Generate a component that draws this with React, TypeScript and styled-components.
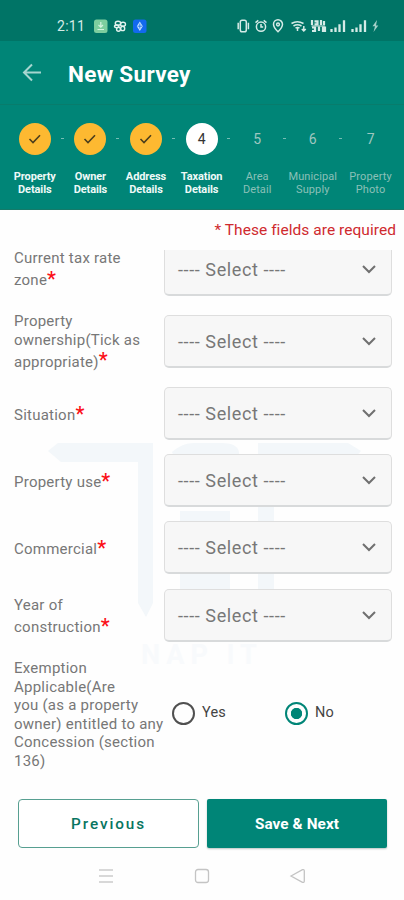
import React, { useState } from "react";
import styled, { createGlobalStyle } from "styled-components";

const teal = "#008577";

const GlobalStyle = createGlobalStyle`
  * { box-sizing: border-box; }
  body { margin: 0; background: #fff; font-family: Roboto, "Liberation Sans", sans-serif; }
  button { font-family: inherit; }
`;

const Screen = styled.div`
  width: 404px;
  height: 900px;
  display: flex;
  flex-direction: column;
  position: relative;
  overflow: hidden;
  background: #fefefe;
`;

const StatusBar = styled.div`
  height: 41px;
  padding: 10px 22px 0 57px;
  background: #007466;
  color: #d5ebe7;
  display: flex;
  justify-content: space-between;
  align-items: center;
`;

const Clock = styled.span`
  font-size: 14px;
  letter-spacing: 0.3px;
  line-height: 16px;
  width: 36px;
`;

const StatusGroup = styled.div`
  display: flex;
  align-items: center;
  height: 16px;
  svg { display: block; }
`;

const AppBar = styled.header`
  height: 64px;
  padding: 2px 20px 0;
  background: ${teal};
  border-bottom: 1px solid #087c6c;
  display: flex;
  align-items: center;
  gap: 24px;
`;

const Title = styled.h1`
  margin: 0;
  font-size: 22.5px;
  font-weight: 700;
  line-height: 28px;
  letter-spacing: 0.3px;
  color: #fff;
`;

const Stepper = styled.nav`
  height: 105px;
  padding: 18px 0 0 7px;
  background: ${teal};
  border-bottom: 1px solid #147a69;
  display: grid;
  grid-template-columns: repeat(6, 55.6px) 60px;
`;

const Step = styled.div`
  display: flex;
  flex-direction: column;
  align-items: center;
  position: relative;
  & + &::before {
    content: "";
    position: absolute;
    left: -2px;
    top: 15px;
    width: 3px;
    height: 1px;
    background: #76bdb4;
  }
`;

type StepState = "done" | "current" | "todo";

const Bullet = styled.span<{ $state: StepState }>`
  width: 32px;
  height: 32px;
  border-radius: 50%;
  display: flex;
  align-items: center;
  justify-content: center;
  font-size: 14px;
  color: ${(p) => (p.$state === "current" ? "#333" : "#9fc7c0")};
  background: ${(p) => (p.$state === "done" ? "#fdb931" : p.$state === "current" ? "#fff" : "transparent")};
`;

const StepLabel = styled.span<{ $state: StepState }>`
  margin-top: 15px;
  font-size: 11px;
  line-height: 13.4px;
  text-align: center;
  white-space: pre;
  font-weight: ${(p) => (p.$state === "todo" ? 400 : 700)};
  letter-spacing: ${(p) => (p.$state === "todo" ? "0.1px" : "-0.1px")};
  color: ${(p) => (p.$state === "todo" ? "#8bc0b8" : "#eef9f7")};
`;

const RequiredNote = styled.p`
  margin: 0;
  height: 40px;
  padding: 10px 8px 0 0;
  text-align: right;
  font-size: 15.5px;
  line-height: 20px;
  letter-spacing: 0.05px;
  color: #cf2a2e;
`;

const Form = styled.main`
  height: 535px;
  position: relative;
  overflow: hidden;
`;

const Watermark = styled.svg`
  position: absolute;
  left: 40px;
  top: 185px;
`;

const Fields = styled.div`
  position: relative;
  margin-top: -7px;
  display: grid;
  grid-template-rows: 72px 72px 67px 67px 68px 66px 110px;
  padding: 0 12px 0 14px;
`;

const FieldRow = styled.div`
  display: grid;
  grid-template-columns: 150px 228px;
  align-items: start;
`;

const Label = styled.label<{ $top: number }>`
  margin-top: ${(p) => p.$top}px;
  font-size: 15px;
  letter-spacing: 0.24px;
  color: #777;
  white-space: nowrap;
`;

const Line = styled.span<{ $last?: boolean }>`
  display: flex;
  align-items: flex-end;
  height: ${(p) => (p.$last ? "22px" : "18.6px")};
  line-height: 18.6px;
`;

const Star = styled.sup`
  align-self: flex-start;
  font-size: 20px;
  font-weight: 500;
  line-height: 22px;
  letter-spacing: 0;
  color: #fb1018;
`;

const Select = styled.button`
  height: 53px;
  padding: 0 14px 0 13px;
  border: 1px solid #dedede;
  border-bottom: 2px solid #d8dadb;
  border-radius: 5px;
  background: #f7f7f7;
  display: flex;
  align-items: center;
  justify-content: space-between;
  font-size: 18px;
  letter-spacing: 0.6px;
  color: #777;
`;

const Radios = styled.div`
  display: grid;
  grid-template-columns: 113px 100px;
  padding: 46px 0 0 8px;
`;

const RadioOption = styled.label`
  display: flex;
  align-items: center;
  gap: 7px;
  font-size: 14.5px;
  letter-spacing: 0.2px;
  line-height: 24px;
  color: #444;
`;

const RadioMark = styled.input`
  appearance: none;
  margin: 0;
  width: 23px;
  height: 23px;
  border: 2px solid #505050;
  border-radius: 50%;
  &:checked {
    border-color: ${teal};
    background: radial-gradient(circle, ${teal} 0 5.3px, transparent 6px);
  }
`;

const Actions = styled.footer`
  height: 65px;
  padding: 14px 17px 2px 18px;
  display: grid;
  grid-template-columns: 181px 180px;
  gap: 8px;
`;

const ActionButton = styled.button<{ $primary?: boolean }>`
  height: 49px;
  padding: 0;
  border: ${(p) => (p.$primary ? "0" : "1px solid #579f91")};
  border-radius: ${(p) => (p.$primary ? "2px" : "4px")};
  background: ${(p) => (p.$primary ? teal : "#fff")};
  color: ${(p) => (p.$primary ? "#fff" : "#087561")};
  box-shadow: ${(p) => (p.$primary ? "0 1px 2px #b9c5c3" : "none")};
  font-size: 15.3px;
  font-weight: ${(p) => (p.$primary ? 700 : 500)};
  letter-spacing: ${(p) => (p.$primary ? "0.1px" : "1.9px")};
`;

const SystemNav = styled.div`
  height: 50px;
  padding: 2px 97px 0 98px;
  display: flex;
  align-items: center;
  justify-content: space-between;
  svg { display: block; }
`;

const Chevron = () => (
  <svg width="16" height="12" viewBox="0 0 16 12" fill="none" stroke="#707070" strokeWidth="2">
    <path d="M2 3 8 9l6-6" />
  </svg>
);

const BackArrow = () => (
  <svg width="24" height="26" viewBox="0 0 24 26" fill="none" stroke="#a6d6d0" strokeWidth="2">
    <path d="M21 11.5H4.5M12 3.5 4 11.5l8 8" />
  </svg>
);

const Tick = () => (
  <svg width="14" height="12" viewBox="0 0 14 12" fill="none" stroke="#4c3e1c" strokeWidth="1.6">
    <path d="m1.5 6 3.5 3.5L12 2.3" />
  </svg>
);

const NotificationIcons = () => (
  <svg width="56" height="16" viewBox="0 0 56 16">
    <rect x="1" y="1.5" width="13.5" height="13.5" rx="2.5" fill="#7dce9f" />
    <path d="M7.8 4v5M5.5 7l2.3 2.2L10 7M4.5 11.5h6.5" fill="none" stroke="#d4f4e0" strokeWidth="1.2" />
    <g fill="none" stroke="#e1f2ee" strokeWidth="1.4">
      <ellipse cx="25" cy="5.2" rx="2.7" ry="1.9" />
      <ellipse cx="30" cy="6.2" rx="2.5" ry="1.9" />
      <ellipse cx="29.7" cy="10.4" rx="2" ry="2.2" />
      <ellipse cx="25.5" cy="11.2" rx="1.9" ry="2" />
      <ellipse cx="23.7" cy="8.3" rx="2.2" ry="1.3" />
    </g>
    <rect x="40" y="1.5" width="13.5" height="13.5" rx="2.5" fill="#1269ee" />
    <path d="m46.8 3.5 3 4.7-3 4.7-3-4.7z" fill="#c5e2ff" />
    <path d="M46.8 5.6v5M44.5 8.2h4.6" stroke="#1269ee" strokeWidth=".8" />
  </svg>
);

const SystemIcons = () => (
  <svg width="145" height="16" viewBox="0 0 145 16" fill="none" stroke="#d5ebe7" strokeWidth="1.5">
    <rect x="3.3" y="2.2" width="6" height="11.6" rx="1.8" />
    <path d="M1.2 4.8v6.4M11.4 4.8v6.4" />
    <circle cx="24" cy="8.7" r="4.6" />
    <path d="M24 6v3h2.2M18.5 4.6l2.8-2.3M29.5 4.6l-2.8-2.3" />
    <path d="M41 13.7s-4.5-4.2-4.5-7.4a4.5 4.5 0 0 1 9 0c0 3.2-4.5 7.4-4.5 7.4Z" />
    <circle cx="41" cy="6.5" r="1.4" />
    <path d="M54.5 5.5c4-2.5 8-2.3 12 0M56.5 8c2.8-1.8 5.4-1.6 8 0M58.5 10.2c1.5-1 2.7-1 4 0M66.8 8v5M64.8 11l2 2 2-2" />
    <path d="M60.5 10v3" />
    <g strokeWidth="2.2">
      <path d="M75 2v5M77.5 3.3h3v3h-3M84 2v5M87 3v4M75 9.5h3v3.5h-3M82 8.5V13M86 9.5h2V13h-2z" />
    </g>
    <path d="M74.5 8h13.5" opacity=".7" />
    <g strokeWidth="2.3">
      <path d="M94.5 11V14M98.5 9.5V14M102.5 6.2V14M107 2.2V14M115.5 11V14M119.5 9.5V14M123.5 6.2V14M128 2.2V14" />
    </g>
    <path d="m140 2-4.5 6.3h2.5L136.5 14l4.8-6.5H139z" fill="#a5d0c8" stroke="none" />
  </svg>
);

const WatermarkArt = () => (
  <Watermark width="330" height="240" viewBox="0 0 330 240" aria-hidden="true">
    <g fill="#f3f7fa">
      <path d="M8 16 18 8h95v160l-7 14-8-14V27H21z" />
      <path d="M132 17q10-9 22-9h28q15 0 17 9v12h-62zM140 76h50v86h-50z" />
      <path d="M218 8h90l13 8-10 11h-77v135h-16z" />
    </g>
    <text x="101" y="229" fontSize="27" fontWeight="700" letterSpacing="6" fill="#f8fafc">NAP IT</text>
  </Watermark>
);

const steps: { label: string; state: StepState }[] = [
  { label: "Property\nDetails", state: "done" },
  { label: "Owner\nDetails", state: "done" },
  { label: "Address\nDetails", state: "done" },
  { label: "Taxation\nDetails", state: "current" },
  { label: "Area\nDetail", state: "todo" },
  { label: "Municipal\nSupply", state: "todo" },
  { label: "Property\nPhoto", state: "todo" },
];

const fields = [
  { lines: ["Current tax rate", "zone"], top: 6 },
  { lines: ["Property", "ownership(Tick as", "appropriate)"], top: -3 },
  { lines: ["Situation"], top: 16 },
  { lines: ["Property use"], top: 16 },
  { lines: ["Commercial"], top: 16 },
  { lines: ["Year of", "construction"], top: 7 },
];

const exemption = [
  "Exemption",
  "Applicable(Are",
  "you (as a property",
  "owner) entitled to any",
  "Concession (section",
  "136)",
];

export default function App() {
  const [exempt, setExempt] = useState("No");
  return (
    <Screen>
      <GlobalStyle />
      <StatusBar>
        <StatusGroup>
          <Clock>2:11</Clock>
          <NotificationIcons />
        </StatusGroup>
        <StatusGroup>
          <SystemIcons />
        </StatusGroup>
      </StatusBar>
      <AppBar>
        <BackArrow />
        <Title>New Survey</Title>
      </AppBar>
      <Stepper>
        {steps.map((s, i) => (
          <Step key={i}>
            <Bullet $state={s.state}>{s.state === "done" ? <Tick /> : i + 1}</Bullet>
            <StepLabel $state={s.state}>{s.label}</StepLabel>
          </Step>
        ))}
      </Stepper>
      <RequiredNote>* These fields are required</RequiredNote>
      <Form>
        <WatermarkArt />
        <Fields>
          {fields.map((f) => (
            <FieldRow key={f.lines[0]}>
              <Label $top={f.top}>
                {f.lines.map((line, i) => {
                  const last = i === f.lines.length - 1;
                  return (
                    <Line key={line} $last={last}>
                      {line}
                      {last && <Star>*</Star>}
                    </Line>
                  );
                })}
              </Label>
              <Select>
                ---- Select ----
                <Chevron />
              </Select>
            </FieldRow>
          ))}
          <FieldRow>
            <Label as="div" $top={4}>
              {exemption.map((line) => (
                <Line key={line}>{line}</Line>
              ))}
            </Label>
            <Radios>
              {["Yes", "No"].map((v) => (
                <RadioOption key={v}>
                  <RadioMark type="radio" name="exempt" checked={exempt === v} onChange={() => setExempt(v)} />
                  {v}
                </RadioOption>
              ))}
            </Radios>
          </FieldRow>
        </Fields>
      </Form>
      <Actions>
        <ActionButton>Previous</ActionButton>
        <ActionButton $primary>Save &amp; Next</ActionButton>
      </Actions>
      <SystemNav>
        <svg width="16" height="16" viewBox="0 0 16 16" stroke="#ccc" strokeWidth="1.4">
          <path d="M1 2h14M1 8h14M1 14h14" />
        </svg>
        <svg width="16" height="16" viewBox="0 0 16 16" fill="none" stroke="#c4c4c4" strokeWidth="1.3">
          <rect x="1.5" y="1.5" width="13" height="13" rx="2.5" />
        </svg>
        <svg width="18" height="16" viewBox="0 0 18 16" fill="none" stroke="#c4c4c4" strokeWidth="1.3">
          <path d="m2 8 11.5-6.3q1.8-.6 1.8 1.2v10.2q0 1.8-1.8 1.2z" />
        </svg>
      </SystemNav>
    </Screen>
  );
}
